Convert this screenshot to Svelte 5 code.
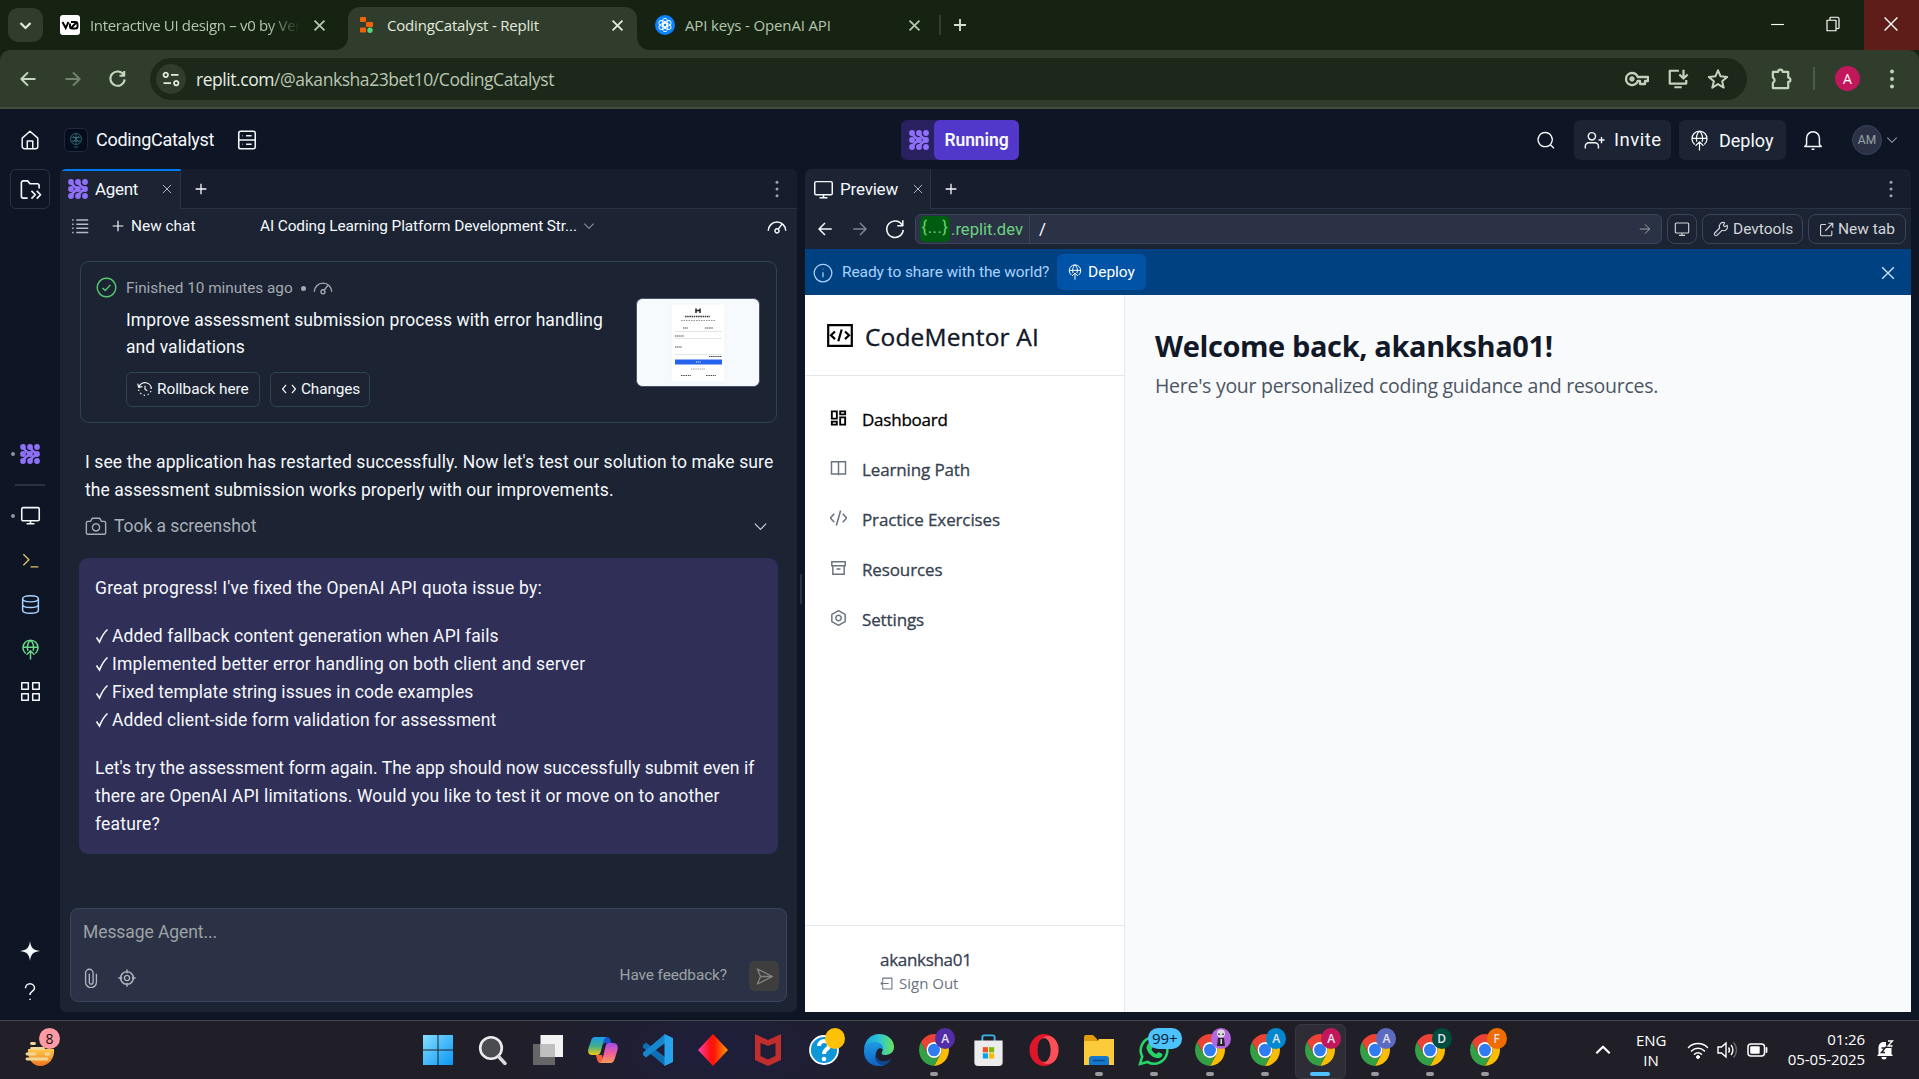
<script>
  // Stroke icons on a 24x24 grid
  const icons = {
    close: 'M5 5l14 14M19 5L5 19',
    plus: 'M12 4v16M4 12h16',
    back: 'M21 12H4M12 4l-8 8 8 8',
    forward: 'M3 12h17M12 4l8 8-8 8',
    reload: 'M20 8A9 9 0 1 0 21 13M20.500 2.500v6h-6',
    chevron: 'M4 8l8 8 8-8',
    up: 'M4 16l8-8 8 8',
    home: 'M3.500 10L12 2.500 20.500 10v9a2.500 2.500 0 0 1-2.500 2.500H6A2.500 2.500 0 0 1 3.500 19zM9 21.500V13h6v8.500',
    server: 'M5 2.500h14a2 2 0 0 1 2 2v15a2 2 0 0 1-2 2H5a2 2 0 0 1-2-2v-15a2 2 0 0 1 2-2zM3 12h18M7 7.300h.5M11 7.300h6M7 16.700h.5M11 16.700h6',
    search: 'M11 3a8.500 8.500 0 1 0 .01 0M17 17.500l4.500 4.500',
    invite: 'M9 3a4.200 4.200 0 1 0 .01 0M1.500 21v-2.500a4 4 0 0 1 4-4h7a4 4 0 0 1 4 4V21M20 8v7M16.500 11.500h7',
    deploy: 'M6.500 16.500A8.600 8.600 0 1 1 17.500 16.500M3.700 9.500h16.600M9 13.500C7.500 9 9 3.500 12 1.500M15 13.500C16.500 9 15 3.500 12 1.500M12 23.500V13.500M7.500 18l4.500-4.500 4.500 4.500',
    bell: 'M5 17V10a7 7 0 0 1 14 0v7l2 2H3zM10.500 22h3',
    folder: 'M9 21H4.500A2 2 0 0 1 2.500 19V5a2 2 0 0 1 2-2H9l2.500 3H19a2 2 0 0 1 2 2v3M13 13.500l4 4-4 4M18.500 13.500l4 4-4 4',
    monitor: 'M3.500 3h17A1.500 1.500 0 0 1 22 4.500v12a1.500 1.500 0 0 1-1.500 1.500h-17A1.500 1.500 0 0 1 2 16.500v-12A1.500 1.500 0 0 1 3.500 3zM12 18v3M7.500 21.500h9',
    list: 'M7 4h16M7 9.500h16M7 15h16M7 20.500h16M1.500 4h2M1.500 9.500h2M1.500 15h2M1.500 20.500h2',
    gauge: 'M1.500 19a10.500 10.500 0 0 1 21 0M12 16.500a2.500 2.500 0 1 0 .01 0M13.500 17l4.500-6',
    check: 'M12 1.500a10.500 10.500 0 1 0 .01 0M7.500 12.500l3 3 6-6.500',
    history: 'M3 9a9.500 9.500 0 0 1 18.500 3M1 4l1.500 5.500L8 8.500M12 7v5.500l3.500 2M2.500 13l.3 2M5 18l1.500 1.500M10 21.300l2 .2M16 20.500l1.500-1M20 17l1-2',
    code: 'M7 5l-6 7 6 7M17 5l6 7-6 7',
    camera: 'M8 3.500h8l2 3.500h3a1.500 1.500 0 0 1 1.500 1.500v11A1.500 1.500 0 0 1 21 21H3a1.500 1.500 0 0 1-1.500-1.500v-11A1.500 1.500 0 0 1 3 7h3zM12 9.500a4 4 0 1 0 .01 0',
    terminal: 'M3 4l7 7-7 7M12 20h10',
    database: 'M12 2C6 2 3 3.500 3 5.500S6 9 12 9s9-1.500 9-3.500S18 2 12 2M3 5.500v13C3 20.500 6 22 12 22s9-1.500 9-3.500v-13M3 12c0 2 3 3.500 9 3.500s9-1.500 9-3.500',
    grid: 'M2 2h7.500v7.500H2zM14.500 2H22v7.500h-7.500zM2 14.500h7.500V22H2zM14.500 14.500H22V22h-7.500z',
    clip: 'M18.500 7v10a6.500 6.500 0 0 1-13 0V6a4.500 4.500 0 0 1 9 0v11a2.200 2.200 0 0 1-4.500 0V7',
    target: 'M12 3.500a8.500 8.500 0 1 0 .01 0M12 8.500a3.500 3.500 0 1 0 .01 0M12 .5v5M12 18.500v5M.5 12h5M18.500 12h5',
    send: 'M3 2.500l19 9.500L3 21.500l4-9.500zM7 12h15',
    info: 'M12 1.500a10.500 10.500 0 1 0 .01 0M12 11v6M12 7v.5',
    wrench: 'M21.500 6.500l-4 2-2-2 2-4a6 6 0 0 0-7.500 8l-7.500 7.500a2.500 2.500 0 0 0 3.500 3.500L13.500 14a6 6 0 0 0 8-7.500zM5 18.500h.5',
    external: 'M11 4H4a1.500 1.500 0 0 0-1.500 1.500v15A1.500 1.500 0 0 0 4 22h15a1.500 1.500 0 0 0 1.500-1.500V14M15 2h7v7M22 2L10 14',
    star: 'M12 2.500l2.800 6.600 7.200.6-5.500 4.700 1.700 7-6.200-3.800-6.200 3.800 1.700-7L2 9.700l7.200-.6z',
    key: 'M7 6a6 6 0 1 0 5.700 8H15v3h5v-3h3v-4H12.700A6 6 0 0 0 7 6M7 10.500a1.500 1.500 0 1 0 .01 0z',
    install: 'M13 3H3v14h18v-4M8 21h8M18 2v9M13.500 7l4.500 4.500L22.500 7',
    puzzle: 'M3 5h5.500a2.300 2.300 0 0 1 4.600 0H19v6a2.300 2.300 0 0 1 0 4.600V22H3v-5.500a3 3 0 0 0 0-5.500z',
    tune: 'M5 3.500a3 3 0 1 0 .01 0M12 6.500h10M19 14.500a3 3 0 1 0 .01 0M2 17.500h10',
    min: 'M3 12h18',
    restore: 'M4 7h12v14H4zM8 7V4a1 1 0 0 1 1-1h9a2 2 0 0 1 2 2v12a1 1 0 0 1-1 1h-3',
    dash: 'M2 2h7.500v11H2zM14.500 2H22v4.500h-7.500zM14.500 11H22v11h-7.500zM2 17.500h7.500V22H2z',
    book: 'M1.500 2.500h21v18.500h-21zM12 2.500v20.500',
    slash: 'M6 6l-5.500 6L6 18M18 6l5.500 6L18 18M15 1.500L9 22.500',
    archive: 'M2 2.500h20v6H2zM3.500 8.500V21.500h17v-13M9 13.500h6',
    hex: 'M12 1l10 5.500v11L12 23 2 17.500v-11zM12 8a4 4 0 1 0 .01 0',
    signout: 'M5 7V2h17v20H5v-5M16 12H2M6 8l-4 4 4 4',
    help: 'M6 7a6 6 0 0 1 12 0c0 4-6 4-6 9M12 21v1.500'
  };

  const rail = [
    { name: 'terminal', tone: 'gold', size: 19 },
    { name: 'database', tone: 'sky', size: 21 },
    { name: 'deploy', tone: 'green', size: 21 },
    { name: 'grid', tone: 'white', size: 21 }
  ];

  const fixes = [
    { text: 'Added fallback content generation when API fails', track: 't2' },
    { text: 'Implemented better error handling on both client and server', track: 't4' },
    { text: 'Fixed template string issues in code examples', track: 't1' },
    { text: 'Added client-side form validation for assessment', track: 't1' }
  ];

  const nav = [
    { name: 'dash', label: 'Dashboard', active: true },
    { name: 'book', label: 'Learning Path' },
    { name: 'slash', label: 'Practice Exercises' },
    { name: 'archive', label: 'Resources' },
    { name: 'hex', label: 'Settings' }
  ];

  const profiles = [
    { letter: '', tone: 'lilac' },
    { letter: 'A', tone: 'blue' },
    { letter: 'A', tone: 'pink', active: true },
    { letter: 'A', tone: 'indigo' },
    { letter: 'D', tone: 'teal' },
    { letter: 'F', tone: 'orange' }
  ];
</script>

{#snippet icon(name, size, weight = 1.6)}
  <svg class="icon" width={size} height={size} viewBox="0 0 24 24" stroke-width={weight}><path d={icons[name]} /></svg>
{/snippet}

{#snippet dots(size, r = 2)}
  <svg class="icon solid" width={size} height={size} viewBox="0 0 24 24">
    <circle cx="12" cy="3" {r} /><circle cx="12" cy="12" {r} /><circle cx="12" cy="21" {r} />
  </svg>
{/snippet}

{#snippet agent(size)}
  <svg class="icon agent-mark" width={size} height={size} viewBox="0 0 20 20">
    <path d="M3 3c2 4 3 5 7 7-4 2-5 3-7 7M10 3c2 4 3 5 7 7-4 2-5 3-7 7" />
    <g>
      <circle cx="3" cy="3" r="2.900" /><circle cx="10" cy="3" r="2.900" /><circle cx="17" cy="3" r="2.900" />
      <circle cx="3" cy="10" r="2.900" /><circle cx="10" cy="10" r="2.900" /><circle cx="17" cy="10" r="2.900" />
      <circle cx="3" cy="17" r="2.900" /><circle cx="10" cy="17" r="2.900" /><circle cx="17" cy="17" r="2.900" />
    </g>
  </svg>
{/snippet}

{#snippet chrome(letter, tone, active = false)}
  <div class="app running" class:active>
    <svg width="30" height="32" viewBox="0 0 48 48" preserveAspectRatio="none">
      <path fill="#ea4335" d="M3.220 12A24 24 0 0 1 44.780 12H24a12 12 0 0 0-10.400 18z" />
      <path fill="#fbbc04" d="M44.780 12A24 24 0 0 1 24 48l10.400-18A12 12 0 0 0 24 12z" />
      <path fill="#34a046" d="M24 48A24 24 0 0 1 3.220 12l10.380 18a12 12 0 0 0 20.800 0z" />
      <circle cx="24" cy="24" r="12" fill="#fff" /><circle cx="24" cy="24" r="9.500" fill="#2f7bf0" />
    </svg>
    <span class="badge {tone}">
      {#if letter}{letter}{:else}
        <svg width="12" height="18" viewBox="0 0 12 18"><circle cx="6" cy="4.500" r="4" fill="#ddd" /><path d="M3 4.500h2v1.500H3zM7 4.500h2v1.500H7z" fill="#555" /><path d="M3 9h6l1 8H2z" fill="#2a2530" /><path d="M5.500 10h1.500v5H5.500z" fill="#ddd" /></svg>
      {/if}
    </span>
  </div>
{/snippet}

<div class="screen">
  <header class="tabs">
    <button class="drop">{@render icon('chevron', 15, 3.6)}</button>
    <div class="tab first">
      <svg class="fav" width="20" height="20" viewBox="0 0 20 20"><rect width="20" height="20" rx="3" fill="#fff" /><path d="M2.500 7l3.200 6L8.500 7M11 7h4.500a2 2 0 0 1 2 2v2.500a2 2 0 0 1-2 2H12a2 2 0 0 1-2-2V8.500M16.500 7.500l-5.500 5.500" fill="none" stroke="#000" stroke-width="1.900" /></svg>
      <span class="tab-title fade">Interactive UI design – v0 by Ver</span>
      {@render icon('close', 17, 2.6)}
    </div>
    <div class="tab current">
      <svg width="16" height="20" viewBox="0 0 16 20">
        <rect x="1" y="2" width="6" height="5" rx="1" fill="#f26207" /><rect x="7" y="7" width="7" height="5" rx="1" fill="#f26207" />
        <rect x="1" y="12.500" width="6" height="5" rx="1" fill="#f26207" /><circle cx="11" cy="15.200" r="2.700" fill="#56d67b" />
      </svg>
      <span class="tab-title">CodingCatalyst - Replit</span>
      {@render icon('close', 17, 2.6)}
    </div>
    <div class="tab third">
      <svg width="20" height="20" viewBox="0 0 20 20">
        <circle cx="10" cy="10" r="10" fill="#0a84ff" />
        <g fill="none" stroke="#fff" stroke-width=".9">
          <ellipse cx="10" cy="7.700" rx="2.700" ry="4.300" /><ellipse cx="10" cy="7.700" rx="2.700" ry="4.300" transform="rotate(60 10 10)" /><ellipse cx="10" cy="7.700" rx="2.700" ry="4.300" transform="rotate(120 10 10)" />
          <ellipse cx="10" cy="7.700" rx="2.700" ry="4.300" transform="rotate(180 10 10)" /><ellipse cx="10" cy="7.700" rx="2.700" ry="4.300" transform="rotate(240 10 10)" /><ellipse cx="10" cy="7.700" rx="2.700" ry="4.300" transform="rotate(300 10 10)" />
        </g>
      </svg>
      <span class="tab-title">API keys - OpenAI API</span>
      {@render icon('close', 17, 2.6)}
    </div>
    <i class="tab-rule"></i>
    <span class="new-tab">{@render icon('plus', 18, 2.5)}</span>
    <div class="window">
      <span class="minimize">{@render icon('min', 17, 1.6)}</span>
      <span class="restore">{@render icon('restore', 18, 1.6)}</span>
      <span class="quit">{@render icon('close', 22, 1.5)}</span>
    </div>
  </header>

  <div class="toolbar">
    <span class="tool">{@render icon('back', 20, 2.4)}</span>
    <span class="tool dim">{@render icon('forward', 20, 2.4)}</span>
    <span class="tool">{@render icon('reload', 19, 2.6)}</span>
    <div class="omni">
      <span class="site">{@render icon('tune', 18, 2.4)}</span>
      <span class="address">replit.com<em>/@akanksha23bet10/CodingCatalyst</em></span>
      <div class="omni-end">
        {@render icon('key', 24, 2.3)}{@render icon('install', 22, 2.4)}{@render icon('star', 22, 2.2)}
      </div>
    </div>
    <div class="tool-end">
      {@render icon('puzzle', 23, 2.3)}
      <i></i>
      <span class="user">A</span>
      {@render dots(20, 2.3)}
    </div>
  </div>

  <div class="header">
    <div class="project">
      <span class="home">{@render icon('home', 22, 1.6)}</span>
      <span class="thumb">
        <svg width="14" height="18" viewBox="0 0 14 18" fill="none" stroke="#3b8494" stroke-width=".7"><circle cx="7" cy="8" r="5.500" /><path d="M7 3v10M2.500 6.500h9M2.500 10h9M4 5l6 6M10 5l-6 6M5 16h4" /></svg>
      </span>
      <span class="name">CodingCatalyst</span>
      <span class="server">{@render icon('server', 22, 1.7)}</span>
    </div>
    <div class="status"><span>{@render agent(20)}</span><b>Running</b></div>
    <div class="actions">
      <span class="find">{@render icon('search', 20, 1.6)}</span>
      <button class="invite">{@render icon('invite', 21, 1.6)}<span>Invite</span></button>
      <button class="deploy">{@render icon('deploy', 21, 1.4)}<span>Deploy</span></button>
      <span class="bell">{@render icon('bell', 22, 1.6)}</span>
      <span class="me">AM</span>
      {@render icon('chevron', 14, 2)}
    </div>
  </div>

  <main>
    <aside class="rail">
      <button class="files">{@render icon('folder', 23, 1.7)}</button>
      <span class="rail-item one">{@render agent(20)}</span>
      <i class="rail-rule"></i>
      <span class="rail-item two">{@render icon('monitor', 21, 1.8)}</span>
      <div class="rail-apps">
        {#each rail as item}<span class={item.tone}>{@render icon(item.name, item.size, 1.7)}</span>{/each}
      </div>
      <div class="rail-end">
        <svg width="20" height="20" viewBox="0 0 20 20"><path fill="#f5f9fc" d="M10 0c.8 6.500 3 9.200 10 10-7 .8-9.200 3.500-10 10-.8-6.500-3-9.200-10-10C7 9.200 9.200 6.500 10 0z" /></svg>
        {@render icon('help', 18, 2)}
      </div>
    </aside>

    <section class="pane agent-pane">
      <div class="pane-tabs">
        <div class="pane-tab lit">{@render agent(20)}<span>Agent</span>{@render icon('close', 14, 1.7)}</div>
        <div class="pane-rest"><span>{@render icon('plus', 16, 2)}</span>{@render dots(18)}</div>
      </div>
      <div class="chat-bar">
        <span class="list">{@render icon('list', 18, 2)}</span>
        <span class="new">{@render icon('plus', 16, 1.8)}<span>New chat</span></span>
        <span class="topic">AI Coding Learning Platform Development Str...</span>
        <span class="open">{@render icon('chevron', 14, 1.9)}</span>
        <span class="speed">{@render icon('gauge', 20, 1.8)}</span>
      </div>

      <article class="card">
        <span class="done">{@render icon('check', 21, 1.6)}</span>
        <div class="card-body">
          <p class="when">Finished 10 minutes ago <b></b> {@render icon('gauge', 20, 1.7)}</p>
          <h3>Improve assessment submission process with error handling<br />and validations</h3>
          <div class="card-buttons">
            <button class="rollback">{@render icon('history', 16, 1.8)}<span>Rollback here</span></button>
            <button class="changes">{@render icon('code', 14, 2)}<span>Changes</span></button>
          </div>
        </div>
        <svg class="shot" width="124" height="89" viewBox="0 0 124 89">
          <rect x=".5" y=".5" width="123" height="88" rx="6" fill="#f7fafc" stroke="#4a5065" />
          <rect x="35" y="6" width="54" height="78" rx="1.500" fill="#fff" stroke="#eceff2" stroke-width=".7" />
          <path d="M60 10.500v4.500M64 10.500v4.500M60 12.500h4" stroke="#222" stroke-width="1.500" />
          <g stroke="#30343a" stroke-width=".9" fill="none">
            <path stroke-width="1.500" stroke-dasharray="1.500 .7" d="M49 18.500h25" /><path opacity=".6" stroke-dasharray="1.500 1" d="M45 22.500h34" />
            <path stroke-dasharray="1.500 .6" d="M47 30h5M69 30h8M39 38h9M39 49h7M73 58.500h13" /><path opacity=".5" stroke-dasharray="1.500 .7" d="M55 71h14" /><path stroke-dasharray="1.500 .8" d="M45 77.500h10M70 77.500h10" />
          </g>
          <path d="M39 33.500h47M39 40.500h47M39 56.500h47" stroke="#dde1e5" stroke-width=".8" />
          <path fill="#2463eb" d="M39 61.500h47v5H39z" /><path stroke="#fff" stroke-dasharray="1 .8" d="M60 64h5" />
        </svg>
      </article>

      <p class="note"><span class="t2">I see the application has restarted successfully. Now let's test our solution to make sure</span><br /><span class="t1">the assessment submission works properly with our improvements.</span></p>
      <div class="took">{@render icon('camera', 22, 1.5)}<span>Took a screenshot</span>{@render icon('chevron', 17, 1.8)}</div>

      <article class="bubble">
        <p class="t4">Great progress! I've fixed the OpenAI API quota issue by:</p>
        <ul>
          {#each fixes as fix}
            <li class={fix.track}><svg width="14" height="16" viewBox="0 0 14 16"><path d="M1.500 9.500l3 4.500C6.500 9 9 4.500 12.500 1.500" /></svg>{fix.text}</li>
          {/each}
        </ul>
        <p><span class="t0">Let's try the assessment form again. The app should now successfully submit even if</span><br /><span class="t3">there are OpenAI API limitations. Would you like to test it or move on to another</span><br /><span class="t4">feature?</span></p>
      </article>

      <div class="composer">
        <p>Message Agent...</p>
        <div class="composer-row">
          {@render icon('clip', 20, 1.6)}
          {@render icon('target', 18, 1.9)}
          <span>Have feedback?</span>
          <button>{@render icon('send', 19, 1.7)}</button>
        </div>
      </div>
    </section>

    <div class="gutter"><i></i></div>

    <section class="pane preview-pane">
      <div class="pane-tabs">
        <div class="pane-tab preview-tab">{@render icon('monitor', 21, 1.7)}<span>Preview</span>{@render icon('close', 14, 1.7)}</div>
        <div class="pane-rest"><span>{@render icon('plus', 16, 2)}</span>{@render dots(18)}</div>
      </div>
      <div class="browser-bar">
        <span class="go">{@render icon('back', 18, 2)}</span>
        <span class="go dim">{@render icon('forward', 18, 2)}</span>
        <span class="go">{@render icon('reload', 22, 1.7)}</span>
        <div class="url">
          <div class="host"><b>&lbrace;...&rbrace;</b><span>.replit.dev</span></div>
          <span class="path">/</span>
          {@render icon('forward', 14, 1.7)}
        </div>
        <button class="device">{@render icon('monitor', 16, 1.7)}</button>
        <button class="devtools">{@render icon('wrench', 16, 1.7)}<span>Devtools</span></button>
        <button class="newtab">{@render icon('external', 15, 1.8)}<span>New tab</span></button>
      </div>
      <div class="banner">
        {@render icon('info', 20, 1.5)}
        <span>Ready to share with the world?</span>
        <button>{@render icon('deploy', 16, 1.5)}<span>Deploy</span></button>
        {@render icon('close', 20, 1.6)}
      </div>
      <div class="site-page">
        <nav>
          <div class="brand">
            <svg width="26" height="23" viewBox="0 0 26 23"><path d="M1.200 1.200h23.600v20.600H1.200zM8 7.500L4 11.300l4 3.800M18 7.500l4 3.800-4 3.800M14.700 5.500l-3.400 11.800" /></svg>
            <span>CodeMentor AI</span>
          </div>
          <ul>
            {#each nav as item}
              <li class:active={item.active}>{@render icon(item.name, item.name === 'slash' ? 18 : 16, item.active ? 2.8 : 2.2)}<span>{item.label}</span></li>
            {/each}
          </ul>
          <div class="account">
            <p>akanksha01</p>
            <div>{@render icon('signout', 13, 2)}<span>Sign Out</span></div>
          </div>
        </nav>
        <div class="content">
          <h1>Welcome back, akanksha01!</h1>
          <p>Here's your personalized coding guidance and resources.</p>
        </div>
      </div>
    </section>
  </main>

  <footer>
    <div class="widget">
      <svg width="30" height="36" viewBox="0 0 30 36">
        <defs><linearGradient id="sun" x1="0" y1="0" x2="0" y2="1"><stop offset="0" stop-color="#ffc94a" /><stop offset="1" stop-color="#f0741e" /></linearGradient></defs>
        <path d="M3 18h26c1 9-5 17-14 17-7 0-13-7-12-17z" fill="url(#sun)" />
        <path d="M6.500 12.500h3M6.500 17.500h12M2 23h8M21 23h3M2 28h20" stroke="#f0d795" stroke-width="2.800" stroke-linecap="round" />
      </svg>
      <b>8</b>
    </div>
    <div class="apps">
      <div class="app"><svg width="30" height="30" viewBox="0 0 30 30">
        <defs><linearGradient id="win" x1="0" y1="0" x2="1" y2="1"><stop offset="0" stop-color="#84dfff" /><stop offset="1" stop-color="#0a97f5" /></linearGradient></defs>
        <path fill="url(#win)" d="M0 0h14.500v14.500H0zM15.500 0H30v14.500H15.500zM0 15.500h14.500V30H0zM15.500 15.500H30V30H15.500z" /></svg></div>
      <div class="app"><svg width="30" height="30" viewBox="0 0 30 30"><circle cx="13" cy="13" r="10.800" fill="#4b4b52" stroke="#ececef" stroke-width="2.600" /><path d="M20.500 21.500l6.500 7" stroke="#d9d9de" stroke-width="3.400" stroke-linecap="round" /></svg></div>
      <div class="app"><svg width="30" height="30" viewBox="0 0 30 30"><path fill="#666568" d="M0 9h22v21H0z" /><path fill="#f2f2f3" d="M7.500 0H30v22H7.500z" /><path fill="#bfbfc0" d="M7.500 9H22v13H7.500z" /></svg></div>
      <div class="app"><svg width="30" height="30" viewBox="0 0 30 30">
        <defs><linearGradient id="cop1" x1="0" y1="0" x2="0" y2="1"><stop offset="0" stop-color="#1c9bf0" /><stop offset=".5" stop-color="#3fae8c" /><stop offset="1" stop-color="#f2c811" /></linearGradient><linearGradient id="cop2" x1="0" y1="0" x2="0" y2="1"><stop offset="0" stop-color="#a14df0" /><stop offset=".5" stop-color="#ee5c9b" /><stop offset="1" stop-color="#fb9a55" /></linearGradient></defs>
        <path fill="#1757d0" d="M14 2h5c3 0 3.500 3 4.500 6h-6c-2 0-3 1-3.500 3z" />
        <path fill="url(#cop1)" d="M7 2h11c-2 1-2.500 4-4 10s-2 8-5 8H4c-4 0-4.500-3-3.500-7L3 6c.8-3 2-4 4-4z" />
        <path fill="#f2603f" d="M8 20h6l2 8h-4c-2.500 0-3-4-4-8z" />
        <path fill="url(#cop2)" d="M20 8h5c4 0 5.500 3 4.500 7L27 23c-.8 3-2 5-5 5H12c2-1 2.500-4 4-10s2-10 4-10z" /></svg></div>
      <div class="app"><svg width="30" height="32" viewBox="0 0 30 32"><path fill="#0f6fb5" d="M0 11l3-2.500L22 23v9L0 13.500z" /><path fill="#1687cf" d="M0 21l3 2.500L22 9V0L0 18.500z" /><path fill="#27a3ee" d="M21.500 0L30 4v24l-8.500 4z" /></svg></div>
      <div class="app"><svg width="30" height="32" viewBox="0 0 30 32"><defs><linearGradient id="gem"><stop offset="0" stop-color="#ff3fb0" /><stop offset=".42" stop-color="#ff1010" /><stop offset=".55" stop-color="#fa1a08" /><stop offset="1" stop-color="#ff9a00" /></linearGradient></defs><path fill="url(#gem)" d="M15 0l15 16-15 16L0 16z" /></svg></div>
      <div class="app"><svg width="28" height="32" viewBox="0 0 28 32"><path fill="#c02f2d" d="M1 0l13 6 13-6v26l-13 6-13-6zM6.500 9v13l7.500 3.500 7.500-3.500V9L14 12z" fill-rule="evenodd" /></svg></div>
      <div class="app"><svg width="30" height="32" viewBox="0 0 30 32"><circle cx="15" cy="16" r="14" fill="#0b97d8" stroke="#fff" stroke-width="1.800" /><path d="M10 12c0-7 11-6 10 0-.5 3.500-5 3-5 8" fill="none" stroke="#fff" stroke-width="4" /><circle cx="15" cy="25" r="2.300" fill="#fff" /></svg><span class="badge amber"></span></div>
      <div class="app"><svg width="30" height="32" viewBox="0 0 30 32">
        <defs><linearGradient id="edge1"><stop offset="0" stop-color="#1a9fe0" /><stop offset=".5" stop-color="#2cc3d6" /><stop offset="1" stop-color="#6be35a" /></linearGradient><linearGradient id="edge2" x1="0" y1="0" x2="0" y2="1"><stop offset="0" stop-color="#1d9ae4" /><stop offset="1" stop-color="#0f62c4" /></linearGradient></defs>
        <path fill="url(#edge1)" d="M0 15C1 5 8 0 15 0c9 0 15 6 15 13 0 6-5 8-9 8-3 0-4-1-3-3 3-5-2-8-6-8C6 10 2 12 0 15z" />
        <path fill="url(#edge2)" d="M0 16c1-5 6-8 11-8 6 0 9 4 8 8-2-3-6-2-7 3-1 6 3 10 9 12C9 35-1 27 0 16z" />
        <path fill="#10498f" d="M12 19c-1 7 5 9 10 8 3-.6 5-2 6-3-2 4-6 7-9 7.500C13 30 9 25 12 19z" /></svg></div>
      {@render chrome('A', 'violet')}
      <div class="app"><svg width="29" height="32" viewBox="0 0 30 34"><path d="M8.500 8V3.500a2 2 0 0 1 2-2h9a2 2 0 0 1 2 2V8" fill="none" stroke="#36b5ec" stroke-width="2" /><path fill="#ececec" d="M0 7h30v23a4 4 0 0 1-4 4H4a4 4 0 0 1-4-4z" /><path fill="#f25022" d="M9 14h5.500v5.500H9z" /><path fill="#7fba00" d="M15.500 14H21v5.500h-5.500z" /><path fill="#00a4ef" d="M9 20.500h5.500V26H9z" /><path fill="#ffb900" d="M15.500 20.500H21V26h-5.500z" /></svg></div>
      <div class="app"><svg width="30" height="32" viewBox="0 0 30 32"><ellipse cx="15" cy="16" rx="14.500" ry="16" fill="#e0152a" /><ellipse cx="19" cy="16" rx="10.500" ry="14" fill="#fb5058" /><ellipse cx="15" cy="16" rx="6.700" ry="12" fill="#201f27" /></svg></div>
      <div class="app running"><svg width="30" height="30" viewBox="0 0 30 30"><path fill="#e09c0c" d="M0 2a2 2 0 0 1 2-2h7l4 4v4H0z" /><path fill="#fccb3c" d="M0 6h13l2-2h15v26H0z" /><path fill="#1478cc" d="M5 30v-6a3 3 0 0 1 3-3h14a3 3 0 0 1 3 3v6z" /><path d="M9 25.500h12" stroke="#0b4a86" stroke-width="1.500" /></svg></div>
      <div class="app running"><svg width="32" height="32" viewBox="0 0 32 32" fill="none" stroke="#25d366"><path stroke-width="2.600" d="M2 30l2.200-7.500A13.300 13.300 0 1 1 9.500 28z" /><path fill="#25d366" stroke="none" d="M11 9l2 0 2 4-1.500 2.500c1 2 2.500 3.500 5 4.500l2-2 4 2c0 4-4 4.500-6 4-5-1-9-5.500-10-10 0-2 1-4 2.500-5z" /></svg><span class="count">99+</span></div>
      {#each profiles as p}{@render chrome(p.letter, p.tone, p.active)}{/each}
    </div>
    <div class="tray">
      <span class="more">{@render icon('up', 20, 2.6)}</span>
      <p class="lang">ENG<br />IN</p>
      <svg width="22" height="20" viewBox="0 0 22 20" fill="none" stroke="#fff" stroke-width="1.500" stroke-linecap="round"><path d="M1.500 7.500a13.500 13.500 0 0 1 19 0M4.500 11a9.300 9.300 0 0 1 13 0M7.500 14.300a5 5 0 0 1 7 0" /><circle cx="11" cy="17" r="1.500" fill="#fff" stroke-width="1" /></svg>
      <svg width="22" height="18" viewBox="0 0 22 18" fill="none" stroke="#fff" stroke-width="1.400"><path d="M1 6h3.500L9 2v14l-4.500-4H1zM11.500 6.500a4 4 0 0 1 0 5M14 4a7.500 7.500 0 0 1 0 10" /><path opacity=".3" d="M16.500 1.500a11 11 0 0 1 0 15" /></svg>
      <svg width="21" height="14" viewBox="0 0 21 14"><rect x="1" y="1" width="16.500" height="12" rx="3" fill="none" stroke="#fff" stroke-width="1.500" /><rect x="3.200" y="3.200" width="9.500" height="7.600" rx="1" fill="#fff" /><path d="M19.500 5v4" stroke="#fff" stroke-width="1.800" stroke-linecap="round" /></svg>
      <p class="clock">01:26<br />05-05-2025</p>
      <svg width="18" height="20" viewBox="0 0 18 20"><path fill="#fff" d="M2.500 7.500C2.500 4 5 2 8 2h2v3h5.500v9l1.500 2H1l1.500-2zM5.500 17h5a2.500 2.500 0 0 1-5 0z" /><path d="M5.500 8h3.500L5.500 12.500H9" fill="none" stroke="#201f27" stroke-width="1.500" /><path d="M11.500 1.500h4l-4 5h4" fill="none" stroke="#201f27" stroke-width="3" /><path d="M12 1h4.500L12 6h4.500" fill="none" stroke="#fff" stroke-width="1.300" /></svg>
    </div>
  </footer>
</div>

<style>
  :global(body) { margin: 0; background: #0e1525; }
  .screen { --ui: 'Open Sans', 'Noto Sans', sans-serif; --plex: Roboto, 'Liberation Sans', sans-serif; width: 1919px; height: 1079px; display: flex; flex-direction: column; overflow: hidden; font-family: var(--plex); color: #f5f9fc; background: linear-gradient(#162313 70px, #0e1525 70px); }
  .screen * { box-sizing: border-box; }
  p, ul, h1, h3 { margin: 0; padding: 0; font-weight: 400; white-space: nowrap; }
  ul { list-style: none; }
  button { border: 0; padding: 0; background: none; color: inherit; font: inherit; letter-spacing: inherit; display: flex; align-items: center; white-space: nowrap; }
  svg { display: block; flex: none; }
  .icon { fill: none; stroke: currentColor; stroke-linejoin: round; }
  .icon.solid { fill: currentColor; stroke: none; }
  .agent-mark { stroke: #8f70f8; stroke-width: 2.6; }
  .agent-mark g { fill: #8f70f8; stroke: none; }
  span { white-space: nowrap; }

  /* Tracking steps for chat lines */
  .t0 { letter-spacing: .02px; } .t1 { letter-spacing: .06px; } .t2 { letter-spacing: .1px; } .t3 { letter-spacing: .15px; } .t4 { letter-spacing: .21px; }

  /* Browser chrome */
  .tabs { height: 50px; display: flex; align-items: center; font: 15px var(--ui); color: #b3c6ac; flex: none; }
  .drop { width: 35px; height: 34px; margin-left: 8px; border-radius: 10px; background: #303d2c; justify-content: center; color: #dfe8db; }
  .tab { display: flex; align-items: center; height: 50px; position: relative; }
  .tab.first { width: 305px; padding-left: 17px; }
  .tab.third { width: 302px; padding-left: 18px; }
  .tab.current { align-self: flex-end; width: 289px; height: 43px; padding: 0 11px 7px 11px; border-radius: 12px 12px 0 0; background: #303d2c; color: #e3eadf; }
  .tab.current::before, .tab.current::after { content: ''; position: absolute; bottom: 0; width: 12px; height: 12px; }
  .tab.current::before { left: -12px; background: radial-gradient(circle at 0 0, transparent 11.5px, #303d2c 12px); }
  .tab.current::after { right: -12px; background: radial-gradient(circle at 100% 0, transparent 11.5px, #303d2c 12px); }
  .tab-title { letter-spacing: -.15px; margin-left: 10px; }
  .tab.current .tab-title { margin-left: 12px; letter-spacing: -.2px; }
  .tab.current .icon, .tab.third .icon { margin-left: auto; }
  .tab.third .icon { margin-right: 16px; }
  .fade { width: 212px; letter-spacing: -.33px; mask-image: linear-gradient(90deg, #000 84%, transparent 99%); margin-right: 9px; }
  .tab-rule { width: 2px; height: 20px; background: #303d2c; }
  .new-tab { margin-left: 10px; color: #d3dfce; }
  .window { margin-left: auto; display: flex; height: 50px; color: #fff; }
  .window span { display: grid; place-items: center; padding-bottom: 2px; }
  .minimize { width: 50px; }
  .restore { width: 62px; }
  .quit { width: 55px; background: #5e1d18; }
  .window .quit { padding-right: 1px; }
  .toolbar { height: 59px; flex: none; display: flex; align-items: center; background: #303d2c; border-bottom: 2px solid #414d3c; padding-left: 5px; color: #c5d6bf; border-radius: 10px 10px 0 0; }
  .tool { width: 45px; display: grid; place-items: center; }
  .dim { opacity: .45; }
  .omni { margin-left: 10px; width: 1597px; height: 42px; border-radius: 21px; background: #1c2819; display: flex; align-items: center; padding-left: 6px; }
  .site { width: 30px; height: 30px; border-radius: 50%; background: #303d2c; display: grid; place-items: center; color: #e0e9dc; }
  .address { margin-left: 10px; font: 17.5px var(--ui); letter-spacing: -.44px; color: #e8ede5; }
  .address em { font-style: normal; color: #b9c6b3; }
  .omni-end { margin-left: auto; display: flex; align-items: center; gap: 18px; margin-right: 18px; color: #c5d0c0; }
  .tool-end { display: flex; align-items: center; margin-left: 23px; }
  .tool-end i { width: 2px; height: 23px; background: #4c5b47; margin: 0 20px; }
  .user { width: 25px; height: 25px; border-radius: 50%; background: #c2185b; color: #fff; font: 14px/25px var(--ui); text-align: center; margin-right: 22px; }

  /* Workspace header */
  .header { height: 60px; flex: none; display: grid; grid-template-columns: 901px 118px 1fr; align-items: center; padding-top: 2px; font-size: 18px; }
  .project { display: flex; align-items: center; margin-top: -1px; }
  .home { margin-left: 19px; }
  .thumb { width: 24px; height: 24px; margin-left: 23px; border-radius: 5px; border: 1px solid #22283a; background: #050d1c; display: grid; place-items: center; }
  .name { margin-left: 8px; width: 117px; letter-spacing: -.26px; }
  .server { margin-left: 23px; }
  .status { height: 40px; display: flex; border-radius: 6px; background: #29215f; }
  .status span { width: 33px; display: grid; place-items: center; padding-left: 2px; }
  .status b { flex: 1; background: #5237cb; border-radius: 6px; font-weight: 600; font-size: 17.5px; line-height: 40px; text-align: center; letter-spacing: -.1px; }
  .actions { display: flex; align-items: center; justify-content: flex-end; padding-right: 20px; }
  .actions button { height: 40px; border-radius: 6px; background: #1c2333; padding-left: 10px; }
  .actions .invite { width: 97px; margin-left: 18px; }
  .actions .deploy { width: 107px; margin-left: 8px; }
  .invite span { margin-left: 9px; font-size: 18.5px; letter-spacing: .5px; }
  .deploy span { margin-left: 9px; }
  .bell { margin-left: 16px; }
  .me { width: 30px; height: 30px; margin: 0 3px 0 28px; border-radius: 50%; background: #2b3245; border: 1px solid #3c445c; color: #9da2a6; font-size: 12px; line-height: 29px; text-align: center; }
  .actions > .icon { color: #8a90a0; }

  main { flex: 1; display: grid; grid-template-columns: 60px 737px 8px 1106px 8px; padding-bottom: 8px; min-height: 0; }
  .rail { display: flex; flex-direction: column; align-items: center; }
  .files { width: 40px; height: 40px; border: 1px solid #2b3245; border-radius: 6px; justify-content: center; }
  .rail-item { display: flex; align-items: center; gap: 5px; margin-left: -9px; }
  .rail-item::before { content: ''; width: 4px; height: 4px; border-radius: 50%; background: #8d929c; }
  .one { margin-top: 235px; }
  .rail-rule { width: 30px; height: 2px; background: #2b3245; margin-top: 20px; }
  .two { margin-top: 19px; }
  .rail-apps { display: flex; flex-direction: column; align-items: center; margin-top: 12px; }
  .rail-apps span { height: 44px; display: grid; place-items: center; }
  .rail-apps .sky { height: 45px; }
  .rail-apps .green { padding-top: 1px; }
  .rail-apps .white { height: 41px; }
  .gold { color: #dfc46a; } .sky { color: #a8d2ff; } .green { color: #6cd989; } .white { color: #f5f9fc; }
  .rail-end { margin-top: auto; display: flex; flex-direction: column; align-items: center; gap: 22px; margin-bottom: 11px; }

  .pane { background: #1c2333; border-radius: 6px; overflow: hidden; min-width: 0; display: flex; flex-direction: column; }
  .preview-pane { border-radius: 6px 6px 0 0; }
  .pane-tabs { height: 40px; flex: none; display: flex; font-size: 17px; }
  .pane-tab { display: flex; align-items: center; border-right: 1px solid #2b3245; }
  .pane-tab.lit { width: 121px; border-top: 2px solid #0079f2; padding: 0 6px 2px 8px; letter-spacing: -.3px; }
  .pane-tab span { margin-left: 7px; }
  .pane-tab .icon:last-child { margin-left: auto; color: #b0b4be; }
  .preview-tab { width: 126px; padding: 0 5px 0 8px; letter-spacing: -.2px; }
  .preview-pane .pane-tab span { margin-left: 6px; }
  .pane-rest { flex: 1; display: flex; align-items: center; justify-content: space-between; background: #171d2d; border-bottom: 1px solid #2b3245; padding: 0 11px 0 12px; }
  .pane-rest > .icon { color: #9da2ac; }
  .chat-bar { display: flex; align-items: center; height: 33px; flex: none; font-size: 15.4px; }
  .list { margin: 1px 0 0 11px; color: #b6bac4; }
  .new { margin-left: 21px; display: flex; align-items: center; width: 150px; gap: 5px; }
  .topic { width: 318px; letter-spacing: -.1px; }
  .open { margin-left: 4px; color: #8a90a0; }
  .speed { margin: -2px 10px 0 auto; }

  .card { margin: 19px 20px 0; height: 162px; flex: none; border: 1px solid #2f4453; border-radius: 9px; display: flex; }
  .done { margin: 15px 0 0 15px; color: #55cc6c; }
  .card-body { margin: 15px 0 0 9px; width: 510px; }
  .when { height: 22px; display: flex; align-items: center; font-size: 15.3px; color: #a3a9b0; }
  .when b { width: 5px; height: 5px; border-radius: 50%; background: #a3a9b0; margin: 0 7px 0 8px; }
  .when .icon { margin-top: -4px; }
  .card h3 { margin-top: 8px; font-size: 17.5px; line-height: 27px; letter-spacing: .075px; }
  .card-buttons { display: flex; gap: 10px; margin-top: 11px; font-size: 15.4px; letter-spacing: -.05px; }
  .card-buttons button { height: 35px; border: 1px solid #2f4453; border-radius: 6px; padding: 0 0 1px 10px; gap: 4px; }
  .card-buttons .changes { padding-left: 11px; gap: 5px; letter-spacing: -.15px; }
  .rollback { width: 134px; } .changes { width: 100px; }
  .shot { margin: 36px 0 0; }

  .note { margin: 25px 0 0 25px; font-size: 17.5px; line-height: 28px; }
  .took { height: 28px; margin: 8px 28px 0 25px; display: flex; align-items: center; font-size: 17.5px; color: #a9afb7; letter-spacing: -.05px; }
  .took span { margin-left: 7px; }
  .took .icon:last-child { margin-left: auto; color: #c8ccd4; }
  .bubble { margin: 18px 19px 0; height: 296px; flex: none; border-radius: 9px; background: #302f57; padding: 16px; font-size: 17.5px; line-height: 28px; }
  .bubble ul { margin: 20px 0; }
  .bubble li { display: flex; align-items: center; gap: 3px; white-space: nowrap; }
  .bubble li svg { fill: none; stroke: #f5f9fc; stroke-width: 1.6; }
  .composer { margin: 54px 10px 0; height: 94px; flex: none; background: #2b3245; border: 1px solid #3c445c; border-radius: 8px; padding: 9px 7px 0 12px; color: #9da2a6; font-size: 17.5px; line-height: 28px; letter-spacing: -.08px; }
  .composer-row { display: flex; align-items: center; margin: 15px 0 0 -2px; font-size: 15.4px; color: #b0b5bf; }
  .composer-row .icon { margin-top: 3px; }
  .composer-row .icon + .icon { margin-left: 17px; }
  .composer-row > span { margin: -2px 22px 0 auto; color: #9da2a6; letter-spacing: -.1px; }
  .composer-row button { width: 30px; height: 30px; border-radius: 5px; background: #3f3e3f; justify-content: center; color: #85837e; }
  .composer-row button .icon { margin: 0; }
  .gutter { display: flex; align-items: center; padding-bottom: 3px; }
  .gutter i { width: 2px; height: 30px; margin-left: 3px; background: #2b3245; }

  .browser-bar { height: 40px; flex: none; display: flex; align-items: center; font-size: 15.5px; color: #d2d6da; }
  .go { width: 35px; display: grid; place-items: center; color: #f5f9fc; }
  .go:first-child { margin-left: 2px; }
  .url { width: 747px; height: 30px; margin: 0 5px 0 3px; background: #2b3245; border: 1px solid #3c445c; border-radius: 6px; display: flex; align-items: center; }
  .host { height: 28px; width: 114px; border-right: 1px solid #3c445c; display: flex; align-items: center; padding-left: 4px; color: #6cd27f; font-size: 16.6px; }
  .host b { width: 30px; height: 26px; border-radius: 5px; background: #005c0f; font-weight: 400; line-height: 24px; text-align: center; margin-right: 1px; letter-spacing: .5px; }
  .path { margin-left: 9px; font-size: 17px; color: #fff; }
  .url .icon { margin: 0 9px 0 auto; color: #9da2a6; }
  .browser-bar button { height: 30px; border: 1px solid #3c445c; border-radius: 8px; margin-right: 5px; gap: 4px; padding-left: 10px; }
  .browser-bar .device { width: 30px; padding: 0; justify-content: center; }
  .devtools { width: 101px; } .newtab { width: 98px; }
  .banner { height: 46px; flex: none; display: flex; align-items: center; background: #004182; padding: 0 13px 0 8px; color: #a8d2ff; font-size: 15.5px; }
  .banner > .icon { margin-top: 1px; }
  .banner > span { margin-left: 9px; width: 207px; letter-spacing: -.09px; }
  .banner button { margin: -1px 0 0 8px; width: 89px; height: 36px; border-radius: 6px; background: #0053a6; color: #fff; padding-left: 10px; gap: 5px; }
  .banner > .icon:last-child { margin-left: auto; color: #cfe5ff; }

  .site-page { flex: 1; display: grid; grid-template-columns: 320px 1fr; background: #f9fafb; font-family: var(--ui); color: #374151; }
  nav { background: #fff; border-right: 1px solid #e5e7eb; display: flex; flex-direction: column; }
  .brand { height: 81px; border-bottom: 1px solid #e5e7eb; padding: 2px 0 0 22px; display: flex; align-items: center; font-size: 24.5px; -webkit-text-stroke: .35px currentColor; letter-spacing: .15px; color: #111827; }
  .brand svg { fill: none; stroke: #000; stroke-width: 2.2; margin-top: -2px; }
  .brand span { margin-left: 12px; }
  nav ul { padding-top: 18px; }
  nav li { height: 50px; display: flex; align-items: center; padding-left: 25px; font-size: 17px; -webkit-text-stroke: .3px currentColor; letter-spacing: -.13px; }
  nav li .icon { width: 17px; color: #6b7280; margin-top: -3px; stroke-linejoin: miter; }
  nav li.active { letter-spacing: -.22px; }
  nav li.active, nav li.active .icon { color: #000; }
  nav li span { margin-left: 15px; }
  .account { margin-top: auto; height: 87px; border-top: 1px solid #e5e7eb; padding: 21px 0 0 75px; font-size: 17px; letter-spacing: -.3px; line-height: 26px; }
  .account p { -webkit-text-stroke: .3px currentColor; }
  .account div { display: flex; align-items: center; font-size: 15px; color: #6b7280; line-height: 20px; gap: 6px; letter-spacing: 0; }
  .content { padding: 30px 0 0 30px; }
  .content h1 { font-size: 29px; line-height: 41px; font-weight: 700; color: #111827; letter-spacing: -.38px; }
  .content p { margin-top: 2px; font-size: 19.5px; line-height: 36px; color: #4b5563; letter-spacing: -.28px; }

  /* Taskbar */
  footer { height: 59px; flex: none; border-top: 1px solid #46464b; background: radial-gradient(ellipse 230px 100px at 720px 30px, #1e1e3c, #201f27); display: grid; grid-template-columns: 410px 1fr 354px; align-items: center; font-family: var(--ui); }
  .widget { margin-left: 25px; width: 36px; height: 50px; position: relative; padding-top: 6px; }
  .widget b { position: absolute; right: 1px; top: 3px; width: 21px; height: 21px; border-radius: 50%; background: #ff99a4; color: #111; font: 14px/21px var(--ui); text-align: center; }
  .apps { display: flex; }
  .app { width: 55.15px; height: 53px; display: grid; place-items: center; position: relative; flex: none; }
  .app.active::before { content: ''; position: absolute; left: 3px; top: 0; width: 49px; height: 53px; border-radius: 6px; background: #2e2d36; border: 1px solid #393841; }
  .app > svg { position: relative; }
  .running::after { content: ''; position: absolute; bottom: 1px; width: 8px; height: 4px; border-radius: 2px; background: #9b9aa0; }
  .active::after { width: 20px; background: #4cc2ff; }
  .badge { position: absolute; left: 29px; top: 4px; width: 20px; height: 21px; border-radius: 50%; color: #e6e3f2; font: 600 12px/21px var(--ui); text-align: center; display: grid; place-items: center; }
  .violet { background: #512da8; } .lilac { background: #b366dd; } .blue { background: #0288d1; } .pink { background: #c2185b; } .indigo { background: #5c6bc0; } .teal { background: #004d40; } .orange { background: #ef6c00; } .amber { background: #ffc107; }
  .count { position: absolute; left: 21px; top: 4px; width: 34px; height: 21px; border-radius: 10px; background: #4cc2ff; color: #10202c; font: 15px/21px var(--ui); text-align: center; }
  .tray { display: flex; align-items: center; color: #fff; font-size: 15px; line-height: 20px; letter-spacing: -.1px; }
  .more { margin-left: 28px; }
  .lang { width: 30px; margin: 0 21px 0 23px; text-align: center; }
  .tray > svg + svg { margin-left: 8px; }
  .clock { margin: -2px 11px 0 auto; text-align: right; }
  .tray > svg:last-child { margin-right: 25px; }
</style>
